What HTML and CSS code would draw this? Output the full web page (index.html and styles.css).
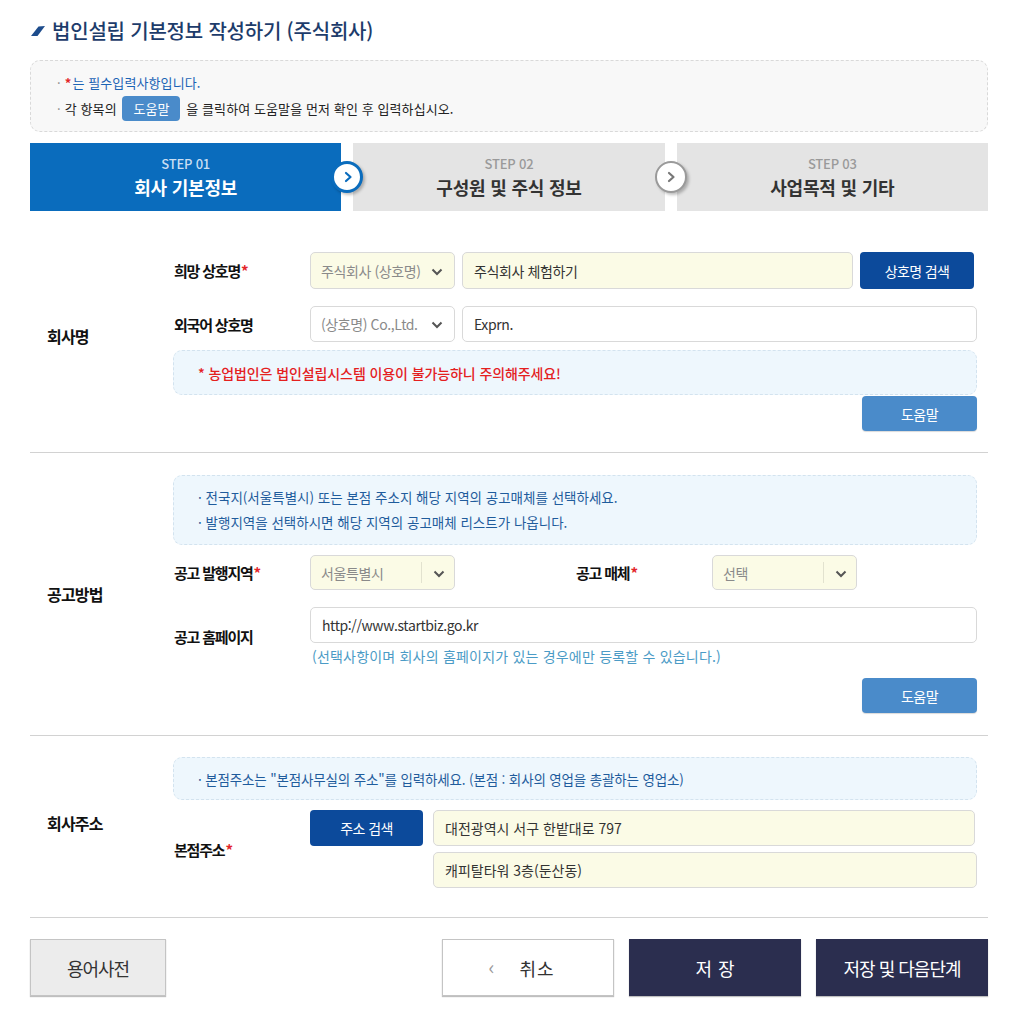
FILE: index.html
```html
<!DOCTYPE html>
<html lang="ko">
<head>
<meta charset="utf-8">
<title>법인설립 기본정보 작성하기</title>
<link rel="stylesheet" href="styles.css">
</head>
<body>
<div class="wrap">
  <h1 class="page-title">
    <svg class="title-mark" viewBox="0 0 14 10" width="14" height="10" aria-hidden="true"><polygon points="0,10 6.5,10 14,0 7.5,0.4" fill="#1d4c8c"/></svg>
    <span>법인설립 기본정보 작성하기 (주식회사)</span>
  </h1>

  <div class="notice">
    <p class="notice-line is-blue"><span class="dot">·</span><em class="req">*</em>는 필수입력사항입니다.</p>
    <p class="notice-line"><span class="dot">·</span>각 항목의 <span class="badge">도움말</span> 을 클릭하여 도움말을 먼저 확인 후 입력하십시오.</p>
  </div>

  <ol class="steps">
    <li class="step is-current">
      <span class="step-no">STEP 01</span>
      <strong class="step-name">회사 기본정보</strong>
    </li>
    <li class="step">
      <span class="step-arrow is-active"><svg viewBox="0 0 12 12" width="12" height="12"><polyline points="4,2 8.5,6 4,10" fill="none" stroke="currentColor" stroke-width="2.2" stroke-linecap="round" stroke-linejoin="round"/></svg></span>
      <span class="step-no">STEP 02</span>
      <strong class="step-name">구성원 및 주식 정보</strong>
    </li>
    <li class="step">
      <span class="step-arrow"><svg viewBox="0 0 12 12" width="12" height="12"><polyline points="4,2 8.5,6 4,10" fill="none" stroke="currentColor" stroke-width="2.2" stroke-linecap="round" stroke-linejoin="round"/></svg></span>
      <span class="step-no">STEP 03</span>
      <strong class="step-name">사업목적 및 기타</strong>
    </li>
  </ol>

  <section class="form-section sec-first">
    <h2 class="sec-title">회사명</h2>
    <div class="sec-body">
      <div class="field-row">
        <label class="field-label">희망 상호명<em class="req">*</em></label>
        <div class="field-ctrl">
          <div class="select is-filled">
            <span class="select-text">주식회사 (상호명)</span>
            <svg class="chev" viewBox="0 0 12 8" width="12" height="8"><polyline points="1.5,1.5 6,6 10.5,1.5" fill="none" stroke="#555" stroke-width="2"/></svg>
          </div>
          <input class="text-input is-filled grow" type="text" value="주식회사 체험하기">
          <button class="btn btn-navy btn-search" type="button">상호명 검색</button>
        </div>
      </div>
      <div class="field-row row-second">
        <label class="field-label">외국어 상호명</label>
        <div class="field-ctrl">
          <div class="select">
            <span class="select-text">(상호명) Co.,Ltd.</span>
            <svg class="chev" viewBox="0 0 12 8" width="12" height="8"><polyline points="1.5,1.5 6,6 10.5,1.5" fill="none" stroke="#555" stroke-width="2"/></svg>
          </div>
          <input class="text-input grow" type="text" value="Exprn.">
        </div>
      </div>
      <div class="info-box info-warn">
        <p class="warn-text">* 농업법인은 법인설립시스템 이용이 불가능하니 주의해주세요!</p>
      </div>
      <div class="help-row help-tight"><button class="btn btn-help" type="button">도움말</button></div>
    </div>
  </section>

  <section class="form-section">
    <h2 class="sec-title">공고방법</h2>
    <div class="sec-body">
      <div class="info-box info-list">
        <p>· 전국지(서울특별시) 또는 본점 주소지 해당 지역의 공고매체를 선택하세요.</p>
        <p>· 발행지역을 선택하시면 해당 지역의 공고매체 리스트가 나옵니다.</p>
      </div>
      <div class="field-row row-notice">
        <label class="field-label">공고 발행지역<em class="req">*</em></label>
        <div class="field-ctrl">
          <div class="select is-filled has-split">
            <span class="select-text">서울특별시</span>
            <span class="split"></span>
            <svg class="chev" viewBox="0 0 12 8" width="12" height="8"><polyline points="1.5,1.5 6,6 10.5,1.5" fill="none" stroke="#555" stroke-width="2"/></svg>
          </div>
          <label class="field-label inline-label">공고 매체<em class="req">*</em></label>
          <div class="select is-filled has-split">
            <span class="select-text">선택</span>
            <span class="split"></span>
            <svg class="chev" viewBox="0 0 12 8" width="12" height="8"><polyline points="1.5,1.5 6,6 10.5,1.5" fill="none" stroke="#555" stroke-width="2"/></svg>
          </div>
        </div>
      </div>
      <div class="field-row row-home">
        <label class="field-label">공고 홈페이지</label>
        <div class="field-stack">
          <input class="text-input" type="text" value="http://www.startbiz.go.kr">
          <p class="hint">(선택사항이며 회사의 홈페이지가 있는 경우에만 등록할 수 있습니다.)</p>
        </div>
      </div>
      <div class="help-row"><button class="btn btn-help" type="button">도움말</button></div>
    </div>
  </section>

  <section class="form-section sec-last">
    <h2 class="sec-title">회사주소</h2>
    <div class="sec-body">
      <div class="info-box info-single">
        <p>· 본점주소는 "본점사무실의 주소"를 입력하세요. (본점 : 회사의 영업을 총괄하는 영업소)</p>
      </div>
      <div class="field-row row-addr">
        <label class="field-label">본점주소<em class="req">*</em></label>
        <div class="addr-ctrl">
          <button class="btn btn-navy btn-addr" type="button">주소 검색</button>
          <div class="addr-inputs">
            <input class="text-input is-filled addr-1" type="text" value="대전광역시 서구 한밭대로 797">
            <input class="text-input is-filled" type="text" value="캐피탈타워 3층(둔산동)">
          </div>
        </div>
      </div>
    </div>
  </section>

  <div class="actions">
    <button class="act act-dict" type="button">용어사전</button>
    <div class="act-group">
      <button class="act act-cancel" type="button"><span class="lt">&lsaquo;</span><span class="spaced">취소</span></button>
      <button class="act act-dark" type="button"><span class="spaced">저장</span></button>
      <button class="act act-dark" type="button">저장 및 다음단계</button>
    </div>
  </div>
</div>
</body>
</html>
```

FILE: styles.css
```css
* { box-sizing: border-box; }

html, body {
  margin: 0;
  padding: 0;
  background: #fff;
}

body {
  font-family: "Noto Sans CJK KR", "Noto Sans", sans-serif;
  color: #222;
  font-size: 14px;
}

p { margin: 0; }

.wrap {
  width: 958px;
  margin-left: 30px;
  padding-bottom: 26px;
}

/* ---------- title ---------- */
.page-title {
  margin: 0;
  height: 60px;
  display: flex;
  align-items: center;
  gap: 7px;
  padding-left: 1px;
  font-size: 20px;
  font-weight: 500;
  color: #1d3c6b;
  letter-spacing: -0.2px;
}

.title-mark { flex: none; margin-top: 2px; }

/* ---------- notice ---------- */
.notice {
  height: 72px;
  padding: 0 26px;
  border: 1px dashed #d9d9d9;
  border-radius: 10px;
  background: #f8f8f8;
  display: flex;
  flex-direction: column;
  justify-content: center;
}

.notice-line {
  line-height: 26px;
  font-size: 13px;
  letter-spacing: 0.1px;
  color: #222;
}

.notice-line.is-blue { color: #1b63b5; }

.dot { color: #888; margin-right: 4px; }

.req {
  font-style: normal;
  color: #e3262a;
  font-weight: 700;
  margin-left: 1px;
}

.notice-line .req { margin: 0 1px 0 0; }

.badge {
  display: inline-block;
  width: 58px;
  height: 25px;
  line-height: 25px;
  margin: 0 2px;
  text-align: center;
  background: #4a8bca;
  color: #fff;
  border-radius: 4px;
  font-size: 13px;
  letter-spacing: 0;
}

/* ---------- steps ---------- */
.steps {
  list-style: none;
  margin: 11px 0 0;
  padding: 0;
  display: grid;
  grid-template-columns: repeat(3, 1fr);
  gap: 12px;
}

.step {
  position: relative;
  height: 68px;
  background: #e4e4e4;
  display: flex;
  flex-direction: column;
  align-items: center;
  justify-content: center;
  gap: 2px;
  color: #333;
}

.step.is-current { background: #0a6cbd; color: #fff; }

.step-no {
  font-size: 13px;
  line-height: 18px;
  font-weight: 500;
  color: #9a9a9a;
  letter-spacing: -0.2px;
}

.step.is-current .step-no { color: #c9def2; }

.step-name {
  font-size: 18px;
  line-height: 24px;
  font-weight: 700;
  letter-spacing: -0.2px;
}

/* arrow circle sitting over the gap between two steps */
.step-arrow {
  position: absolute;
  left: -22px;
  top: 50%;
  width: 32px;
  height: 32px;
  margin-top: -16px;
  border-radius: 50%;
  background: #fff;
  border: 2px solid #9a9a9a;
  color: #777;
  display: flex;
  align-items: center;
  justify-content: center;
  box-shadow: 2px 2px 3px rgba(0, 0, 0, 0.25);
  z-index: 1;
}

.step-arrow.is-active { border-color: #0a6cbd; color: #0a6cbd; border-width: 3px; }

.step-arrow svg { margin-left: 1px; }

/* ---------- form sections ---------- */
.form-section {
  display: grid;
  grid-template-columns: 143px 1fr;
  align-items: center;
  padding: 22px 11px 22px 0;
  border-bottom: 1px solid #d2d2d2;
}

.sec-first { padding-top: 41px; padding-bottom: 21px; }
.sec-last { padding-top: 21px; padding-bottom: 29px; }

.sec-title {
  margin: 0;
  padding-left: 17px;
  font-size: 16px;
  font-weight: 700;
  letter-spacing: -0.8px;
  color: #111;
}

.sec-first .sec-title { margin-bottom: 12px; }

.sec-body { display: flex; flex-direction: column; }

.field-row {
  display: grid;
  grid-template-columns: 137px 1fr;
  align-items: center;
}

.field-label {
  font-size: 15px;
  font-weight: 700;
  letter-spacing: -1.2px;
  color: #111;
  padding-left: 1px;
}

.field-ctrl {
  display: flex;
  align-items: center;
  gap: 7px;
}

.grow { flex: 1; min-width: 0; }

.text-input,
.select {
  height: 37px;
  border: 1px solid #d9d9d9;
  border-radius: 5px;
  background: #fff;
  font-family: inherit;
  font-size: 14px;
  letter-spacing: -0.4px;
  color: #333;
  padding: 0 11px;
  outline: none;
}

.is-filled { background: #fbfbe6; }

.select {
  position: relative;
  flex: none;
  width: 145px;
  display: flex;
  align-items: center;
  padding: 0 10px;
}

.select-text {
  font-size: 14px;
  color: #8a8a8a;
  letter-spacing: -0.4px;
  white-space: nowrap;
}

.chev { position: absolute; right: 11px; top: 50%; margin-top: -3px; }

.has-split .chev { right: 9px; }

.split {
  position: absolute;
  right: 32px;
  top: 6px;
  bottom: 6px;
  width: 1px;
  background: #e2e2cf;
}

.btn {
  border: 0;
  font-family: inherit;
  color: #fff;
  cursor: pointer;
  border-radius: 4px;
  letter-spacing: -0.6px;
}

.btn-navy { background: #0c4a9b; font-size: 14px; }

.btn-search { width: 114px; height: 37px; margin-right: 3px; }

.row-second { margin-top: 17px; }
.row-second .text-input { height: 36px; }
.row-second .select { height: 36px; }

/* soft information panels */
.info-box {
  background: #eef7fd;
  border: 1px dashed #d3e3ef;
  border-radius: 9px;
  padding: 0 24px;
  display: flex;
  flex-direction: column;
  justify-content: center;
  color: #1f5c9c;
  font-size: 13.5px;
  letter-spacing: 0;
}

.info-warn { margin-top: 8px; height: 45px; }

.warn-text {
  color: #e4201f;
  font-size: 14px;
  font-weight: 500;
  letter-spacing: -0.1px;
}

.info-list { height: 70px; }
.info-list p { line-height: 25px; }

.info-single { height: 43px; letter-spacing: -0.15px; }

.help-row { display: flex; justify-content: flex-end; margin-top: 12px; }
.help-tight { margin-top: 1px; }

.btn-help {
  width: 115px;
  height: 35px;
  background: #4a8bca;
  font-size: 14px;
  box-shadow: 0 1px 1px rgba(0, 0, 0, 0.15);
}

.row-notice { margin-top: 10px; }
.row-notice .select { height: 35px; }

.inline-label { width: 136px; margin-left: 121px; padding-left: 0; }
.row-notice .field-ctrl { gap: 0; }

.row-home { margin-top: 17px; }

.field-stack { display: flex; flex-direction: column; }
.field-stack .text-input { height: 36px; width: 100%; }

.hint {
  margin-top: 3px;
  line-height: 20px;
  font-size: 14px;
  color: #4b9bc6;
  letter-spacing: 0.2px;
  padding-left: 2px;
}

.row-addr { margin-top: 10px; }

.addr-ctrl { display: flex; align-items: flex-start; gap: 10px; }

.btn-addr { flex: none; width: 113px; height: 36px; }

.addr-inputs { flex: 1; display: flex; flex-direction: column; gap: 6px; }
.addr-inputs .text-input { height: 36px; width: 100%; font-size: 14px; letter-spacing: 0; }
.addr-inputs .addr-1 { width: calc(100% - 2px); }

/* ---------- bottom actions ---------- */
.actions {
  margin-top: 21px;
  display: flex;
  justify-content: space-between;
  align-items: center;
}

.act-group { display: flex; gap: 15px; }

.act {
  height: 57px;
  font-family: inherit;
  font-size: 18px;
  letter-spacing: -1px;
  border: 1px solid #c4c4c4;
  background: #fff;
  color: #333;
  display: flex;
  align-items: center;
  justify-content: center;
  box-shadow: 0 1px 1px rgba(0, 0, 0, 0.25);
  cursor: pointer;
}

.act-dict { width: 136px; background: #ececec; }

.act-cancel { width: 172px; gap: 26px; padding-right: 20px; }

.act-cancel .spaced { letter-spacing: 1px; margin-right: -1px; }

.lt { color: #999; font-size: 20px; margin-top: -2px; }

.spaced { letter-spacing: 6px; margin-right: -6px; }

.act-dark {
  width: 172px;
  background: #2b2e4f;
  border-color: #2b2e4f;
  color: #fff;
}
```
